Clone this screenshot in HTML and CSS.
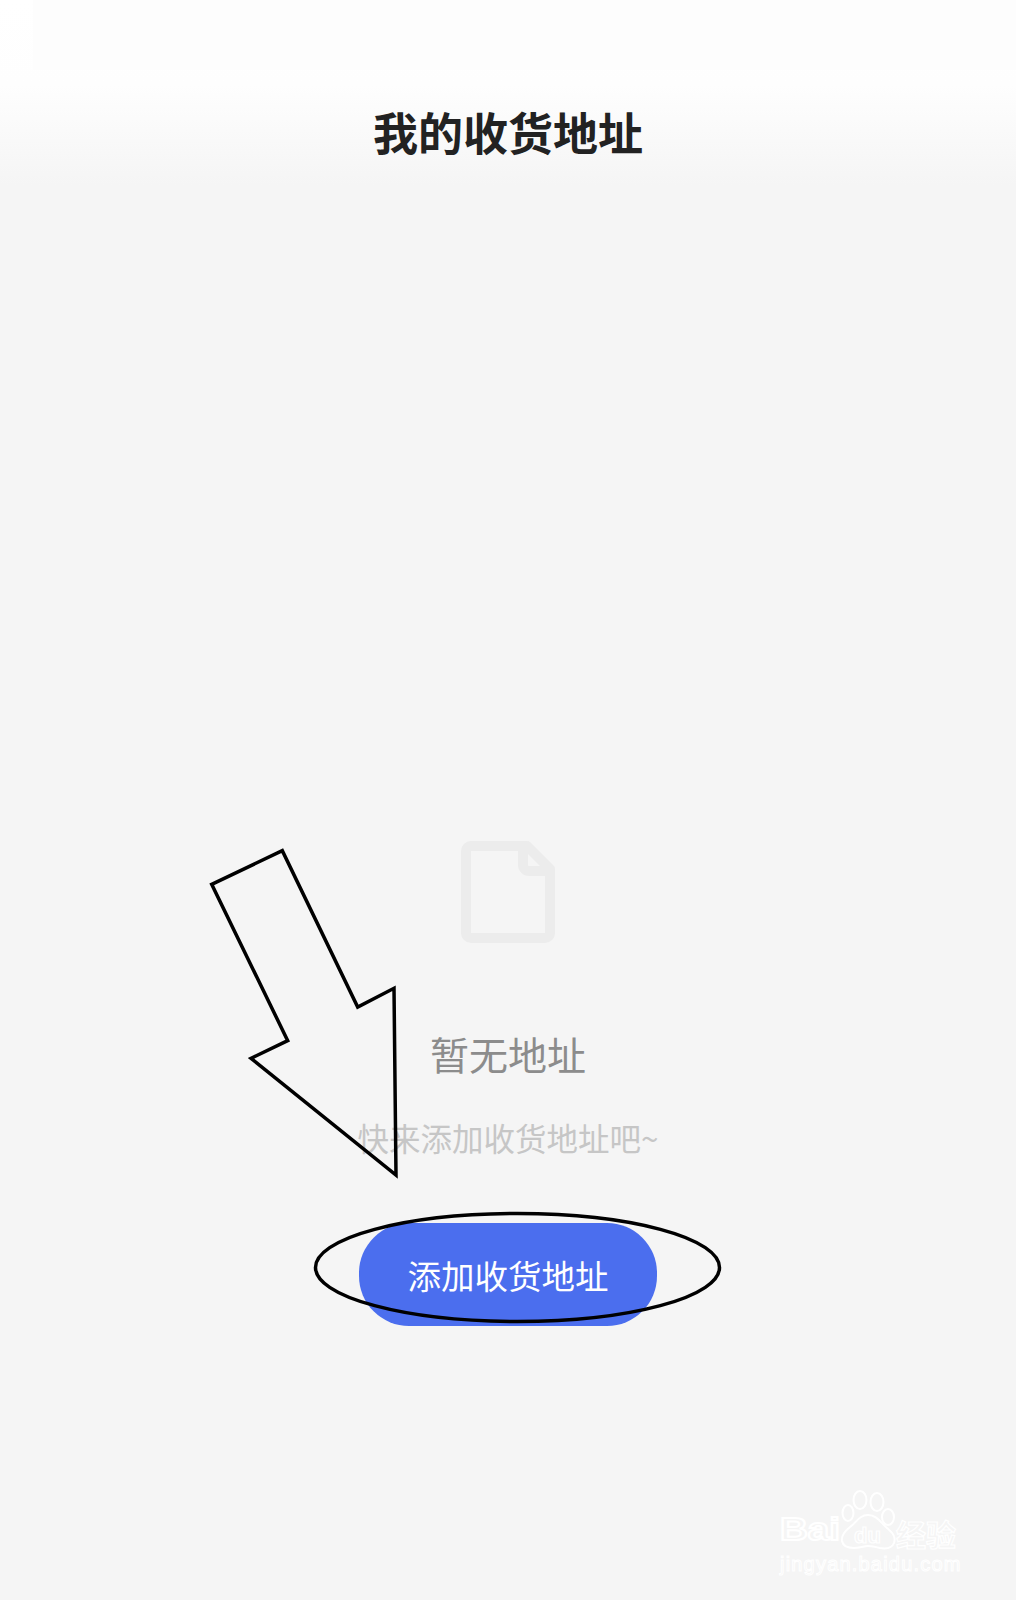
FILE: index.html
```html
<!DOCTYPE html>
<html lang="zh-CN">
<head>
    <meta charset="UTF-8">
    <meta name="viewport" content="width=device-width, initial-scale=1.0">
    <title>我的收货地址</title>
    <link rel="stylesheet" href="styles.css">
</head>
<body>

<div class="page">
    <div class="status-bar"></div>

    <div class="header">
        <h1>我的收货地址</h1>
    </div>

    <div class="empty">
        <svg class="file-icon" width="94" height="102" viewBox="0 0 94 102">
            <path d="M10 5H66L89 28V92a5 5 0 0 1-5 5H10a5 5 0 0 1-5-5V10a5 5 0 0 1 5-5Z" fill="none" stroke="#ececec" stroke-width="10" stroke-linejoin="round"/>
            <path d="M62 5V24a6 6 0 0 0 6 6H89" fill="none" stroke="#ececec" stroke-width="10" stroke-linejoin="round"/>
        </svg>
        <p class="empty-title">暂无地址</p>
        <p class="empty-hint">快来添加收货地址吧~</p>
        <button class="add-button">添加收货地址</button>
    </div>

    <!-- annotations drawn on top of the screenshot -->
    <svg class="marks" width="1016" height="1600" viewBox="0 0 1016 1600">
        <path d="M282.3 850.7 211.7 884.3 287.7 1040.7 251 1058.3 396 1175 394 988.3 357.7 1007Z" fill="none" stroke="#000" stroke-width="3.5"/>
        <ellipse cx="517.5" cy="1267.5" rx="202" ry="54" fill="none" stroke="#000" stroke-width="3.5"/>
    </svg>

    <svg class="watermark" width="220" height="110" viewBox="0 0 220 110">
        <g class="wm-paw">
            <ellipse cx="100" cy="20" rx="6.5" ry="9"/>
            <ellipse cx="117" cy="22" rx="6.5" ry="9"/>
            <ellipse cx="88" cy="33" rx="5.5" ry="8"/>
            <ellipse cx="128" cy="37" rx="6" ry="8"/>
            <path d="M108 35c9 0 13 8 19 13 6 5 9 9 7 15-2 5-8 6-14 5-4-1-8-2-12-2s-9 2-14 2c-6 0-11-2-12-7-1-6 3-10 8-14 6-4 9-12 18-12Z"/>
        </g>
        <text class="wm-text wm-brand" x="20" y="60" textLength="60" lengthAdjust="spacingAndGlyphs">Bai</text>
        <text class="wm-text wm-du" x="94" y="63">du</text>
        <text class="wm-text wm-cn" x="136" y="66">经验</text>
        <text class="wm-text wm-url" x="20" y="91">jingyan.baidu.com</text>
    </svg>
</div>

</body>
</html>
```

FILE: styles.css
```css
body {
    margin: 0;
    font-family: "Noto Sans CJK SC", "Noto Sans", sans-serif;
    background-color: #f5f5f5;
}
.page {
    position: relative;
    height: 1600px;
    overflow: hidden;
    background: linear-gradient(#ffffff 0, #fefefe 85px, #f5f5f5 185px);
}
.status-bar {
    height: 70px;
    margin-left: 33px;
    background-color: #fdfdfd;
}
.header {
    padding-top: 29px;
    text-align: center;
}
.header h1 {
    margin: 0;
    font-size: 45px;
    line-height: 65px;
    font-weight: 700;
    color: #222222;
}
.empty {
    display: flex;
    flex-direction: column;
    align-items: center;
    padding-top: 677px;
}
.file-icon {
    display: block;
}
.empty-title {
    margin: 82px 0 0;
    font-size: 39px;
    line-height: 56px;
    color: #8c8c8c;
}
.empty-hint {
    margin: 34px 0 0;
    font-size: 31.5px;
    line-height: 44px;
    color: #c6c6c6;
}
.add-button {
    margin-top: 64px;
    width: 298px;
    height: 103px;
    padding: 0;
    border: none;
    border-radius: 50px;
    background-color: #4b6eee;
    color: #ffffff;
    font-family: inherit;
    font-size: 33.5px;
    cursor: pointer;
}
.marks {
    position: absolute;
    left: 0;
    top: 0;
}
.watermark {
    position: absolute;
    left: 760px;
    top: 1480px;
}
.wm-paw {
    fill: none;
    stroke: #ffffff;
    stroke-width: 2;
}
.wm-text {
    fill: none;
    stroke: #ffffff;
    font-family: "Liberation Sans", sans-serif;
    font-weight: 700;
}
.wm-brand {
    font-size: 32px;
    stroke-width: 2;
}
.wm-du {
    font-size: 22px;
    stroke-width: 1.2;
}
.wm-cn {
    font-family: "Noto Sans CJK SC", sans-serif;
    font-size: 30px;
    stroke-width: 1.2;
}
.wm-url {
    font-size: 20px;
    font-weight: 400;
    stroke-width: 1;
    letter-spacing: 1.2px;
}
```
